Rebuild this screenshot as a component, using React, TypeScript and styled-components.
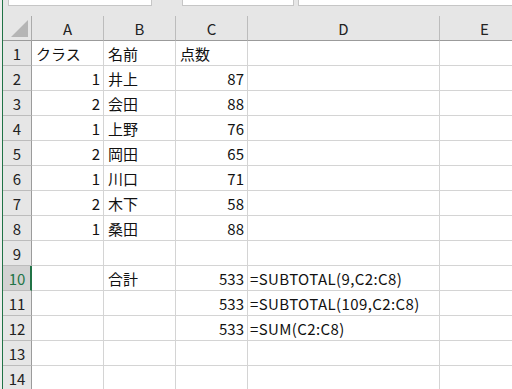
import { createGlobalStyle, styled } from 'styled-components';

const GlobalStyle = createGlobalStyle`
  html, body {
    margin: 0;
    padding: 0;
    background: #ffffff;
    overflow: hidden;
  }
  body {
    font-family: "Noto Sans CJK JP", "Noto Sans", sans-serif;
    color: #1a1a1a;
  }
`;

const COLUMNS = ['A', 'B', 'C', 'D', 'E'];

type Row = {
  a?: string;
  b?: string;
  c?: string;
  d?: string;
};

const rows: Row[] = [
  { a: 'クラス', b: '名前', c: '点数' },
  { a: '1', b: '井上', c: '87' },
  { a: '2', b: '会田', c: '88' },
  { a: '1', b: '上野', c: '76' },
  { a: '2', b: '岡田', c: '65' },
  { a: '1', b: '川口', c: '71' },
  { a: '2', b: '木下', c: '58' },
  { a: '1', b: '桑田', c: '88' },
  {},
  { b: '合計', c: '533', d: '=SUBTOTAL(9,C2:C8)' },
  { c: '533', d: '=SUBTOTAL(109,C2:C8)' },
  { c: '533', d: '=SUM(C2:C8)' },
  {},
  {},
];

const SELECTED_ROW = 10;

const isNumber = (v?: string) => !!v && /^\d+$/.test(v);

function App() {
  return (
    <>
      <GlobalStyle />
      <Window>
        <LeftEdge />
        <Main>
          <TopStrip>
            <InputBox $width={142} $gap={5} />
            <InputBox $width={110} $gap={30} />
            <InputBox $width={230} $gap={4} />
          </TopStrip>
          <Sheet>
            <Corner>
              <CornerTriangle />
            </Corner>
            {COLUMNS.map((c) => (
              <ColHeader key={c}>{c}</ColHeader>
            ))}
            {rows.map((r, i) => {
              const n = i + 1;
              return [
                <RowHeader key={`h${n}`} $selected={n === SELECTED_ROW}>
                  {n}
                </RowHeader>,
                <Cell key={`a${n}`} $right={isNumber(r.a)}>
                  {r.a}
                </Cell>,
                <Cell key={`b${n}`} $right={isNumber(r.b)}>
                  {r.b}
                </Cell>,
                <Cell key={`c${n}`} $right={isNumber(r.c)}>
                  {r.c}
                </Cell>,
                <Cell key={`d${n}`} $right={false} $formula>
                  {r.d}
                </Cell>,
                <Cell key={`e${n}`} $right={false} />,
              ];
            })}
          </Sheet>
        </Main>
      </Window>
    </>
  );
}

export default App;

const Window = styled.div`
  display: flex;
  width: 512px;
  height: 389px;
  overflow: hidden;
`;

const LeftEdge = styled.div`
  width: 2px;
  flex: none;
  background: #eeeeee;
  border-right: 1px solid #217346;
`;

const Main = styled.div`
  flex: 1;
  display: flex;
  flex-direction: column;
  min-width: 0;
`;

const TopStrip = styled.div`
  height: 16px;
  flex: none;
  display: flex;
  align-items: flex-start;
  background: #e6e6e6;
`;

const InputBox = styled.div<{ $width: number; $gap: number }>`
  width: ${(p) => p.$width}px;
  margin-left: ${(p) => p.$gap}px;
  height: 5px;
  flex: none;
  background: #ffffff;
  border: 1px solid #c6c6c6;
  border-top: none;
`;

const Sheet = styled.div`
  display: grid;
  grid-template-columns: 29px 72px 72px 72px 192px 90px;
  grid-template-rows: 25px;
  grid-auto-rows: 25px;
  font-size: 15px;
  line-height: 1;
`;

const Corner = styled.div`
  position: relative;
  background: #e6e6e6;
  border-right: 1px solid #ababab;
  border-bottom: 1px solid #9b9b9b;
`;

const CornerTriangle = styled.div`
  position: absolute;
  left: 8px;
  top: 4px;
  width: 17px;
  height: 17px;
  background: #b5b5b5;
  clip-path: polygon(100% 0, 100% 100%, 0 100%);
`;

const ColHeader = styled.div`
  display: flex;
  align-items: center;
  justify-content: center;
  background: #e6e6e6;
  border-right: 1px solid #bcbcbc;
  border-bottom: 1px solid #9b9b9b;
  color: #222222;
  padding-top: 1px;
`;

const RowHeader = styled.div<{ $selected: boolean }>`
  display: flex;
  align-items: center;
  justify-content: center;
  background: ${(p) => (p.$selected ? '#d2d2d2' : '#e6e6e6')};
  color: ${(p) => (p.$selected ? '#217346' : '#222222')};
  border-right: ${(p) => (p.$selected ? '2px solid #217346' : '1px solid #9b9b9b')};
  border-bottom: 1px solid #bcbcbc;
  padding-left: ${(p) => (p.$selected ? '1px' : '0')};
`;

const Cell = styled.div<{ $right: boolean; $formula?: boolean }>`
  display: flex;
  align-items: center;
  justify-content: ${(p) => (p.$right ? 'flex-end' : 'flex-start')};
  padding: 1px ${(p) => (p.$right ? '3px' : '0')} 0 ${(p) => (p.$formula ? '2px' : '4px')};
  letter-spacing: ${(p) => (p.$formula ? '0.4px' : '0')};
  border-right: 1px solid #d4d4d4;
  border-bottom: 1px solid #d4d4d4;
  white-space: nowrap;
  overflow: visible;
  color: #111111;
`;
